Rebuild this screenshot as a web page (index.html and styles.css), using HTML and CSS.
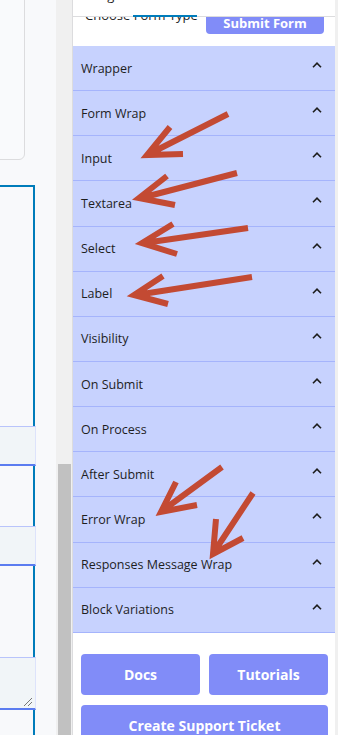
FILE: index.html
```html
<!DOCTYPE html>
<html lang="en">
<head>
  <meta charset="UTF-8" />
  <meta name="viewport" content="width=device-width, initial-scale=1.0"/>
  <title>Form block settings</title>
  <link rel="stylesheet" href="styles.css">
</head>
<body>
  <div class="editor">
    <div class="card"></div>
    <div class="canvas">
      <div class="field field-1"></div>
      <div class="field field-2"></div>
      <div class="field textarea"><span class="grip"></span></div>
    </div>
  </div>

  <div class="scrollbar"><div class="thumb"></div></div>

  <div class="panel">
    <div class="tabbar">
      <span class="tab-label">Design</span>
      <span class="tab-active"></span>
    </div>

    <div class="form-type">
      <span class="form-type-label">Choose Form Type</span>
      <span class="submit-btn">Submit Form</span>
    </div>

    <div class="accordion" id="accordion"></div>

    <div class="links">
      <a class="btn">Docs</a>
      <a class="btn">Tutorials</a>
      <a class="btn wide">Create Support Ticket</a>
    </div>
  </div>

  <div class="edge"></div>

  <svg class="arrows" width="338" height="735" viewBox="0 0 338 735">
    <g fill="none" stroke="#c34a33" stroke-width="6" stroke-linecap="butt" stroke-linejoin="miter">
      <path d="M228 114 L149 154 M170 127 L147 155 L183 154"/>
      <path d="M237 173 L141 198 M167 176 L139 198 L175 205"/>
      <path d="M248 228 L144 243 M173 224 L142 243 L177 254"/>
      <path d="M252 277 L136 295 M163 276 L134 295 L168 304"/>
      <path d="M222 467 L162 511 M176 482 L161 512 L197 505"/>
      <path d="M253 493 L214 552 M216 519 L213 554 L243 538"/>
    </g>
  </svg>

  <script>
    const sections = [
      "Wrapper", "Form Wrap", "Input", "Textarea", "Select", "Label",
      "Visibility", "On Submit", "On Process", "After Submit",
      "Error Wrap", "Responses Message Wrap", "Block Variations"
    ];

    const acc = document.getElementById("accordion");
    sections.forEach(name => {
      const row = document.createElement("div");
      row.className = "acc-row";
      row.innerHTML = `
        <span>${name}</span>
        <svg class="chevron" width="10" height="6" viewBox="0 0 10 6">
          <polyline points="1,5.2 5,1.2 9,5.2" fill="none" stroke="#1e1e1e" stroke-width="1.6"/>
        </svg>
      `;
      acc.appendChild(row);
    });
  </script>
</body>
</html>
```

FILE: styles.css
```css
* { box-sizing: border-box; }
body { margin: 0; display: flex; height: 735px; overflow: hidden; font-family: "Open Sans", "Noto Sans", sans-serif; color: #1e1e1e; background: #f8f9fb; position: relative; }

/* editor canvas on the left */
.editor { width: 56px; flex-shrink: 0; background: #f8f9fb; overflow: hidden; }
.card { margin: -10px 0 0 -10px; width: 35px; height: 170px; border: 1px solid #dcdcde; border-radius: 6px; background: #f9fafc; }
.canvas { margin: 25px 0 0 -10px; width: 45px; height: 600px; border: 2px solid #007cba; padding-top: 239px; }
.field { margin-right: -3px; height: 40px; background: #f1f5f8; border-top: 1px solid #b9c4fb; border-right: 1px solid #dde3fb; border-bottom: 2px solid #5b7cf0; }
.field-2 { margin-top: 60px; }
.textarea { margin-top: 91px; height: 53px; position: relative; }
.grip { position: absolute; right: 3px; bottom: 2px; width: 8px; height: 8px; background: linear-gradient(135deg, transparent 45%, #777 45%, #777 52%, transparent 52%, transparent 70%, #777 70%, #777 77%, transparent 77%); }

.scrollbar { width: 16px; flex-shrink: 0; background: #f0f0f0; padding: 464px 1px 0 2px; }
.thumb { height: 100%; background: #c1c1c1; }

/* settings panel */
.panel { width: 263px; flex-shrink: 0; background: #fff; border-left: 1px solid #dcdcde; display: flex; flex-direction: column; overflow: hidden; }
.panel > * { flex-shrink: 0; }
.tabbar { height: 17px; border-bottom: 1px solid #dcdcde; position: relative; }
.tab-label { display: block; font-size: 13px; line-height: 16px; margin: -13px 0 0 8px; }
.tab-active { position: absolute; left: 60px; bottom: -1px; width: 64px; height: 2px; background: #007cba; }

.form-type { height: 29px; overflow: hidden; display: flex; justify-content: space-between; align-items: flex-start; padding: 0 11px 0 12px; }
.form-type-label { font-size: 13px; line-height: 13px; margin-top: -8px; }
.submit-btn { width: 118px; height: 28px; margin-top: -11px; background: #818cf8; color: #fff; font-weight: 700; font-size: 13px; border-radius: 4px; display: flex; align-items: flex-end; justify-content: center; padding-bottom: 2px; }

.accordion { background: #c7d2fe; }
.acc-row { height: 45.15px; border-bottom: 1px solid #a5b4fc; display: flex; align-items: center; justify-content: space-between; padding: 0 13px 0 8px; font-size: 12.5px; font-weight: 500; }
.chevron { margin-bottom: 6px; }

.links { display: grid; grid-template-columns: 1fr 1fr; gap: 10px 9px; padding: 21px 7px 0 8px; }
.btn { height: 41px; background: #818cf8; color: #fff; font-weight: 700; font-size: 14px; border-radius: 4px; display: flex; align-items: center; justify-content: center; }
.wide { grid-column: span 2; }

.edge { flex: 1; background: #f0f0f0; }

.arrows { position: absolute; left: 0; top: 0; pointer-events: none; }
```
